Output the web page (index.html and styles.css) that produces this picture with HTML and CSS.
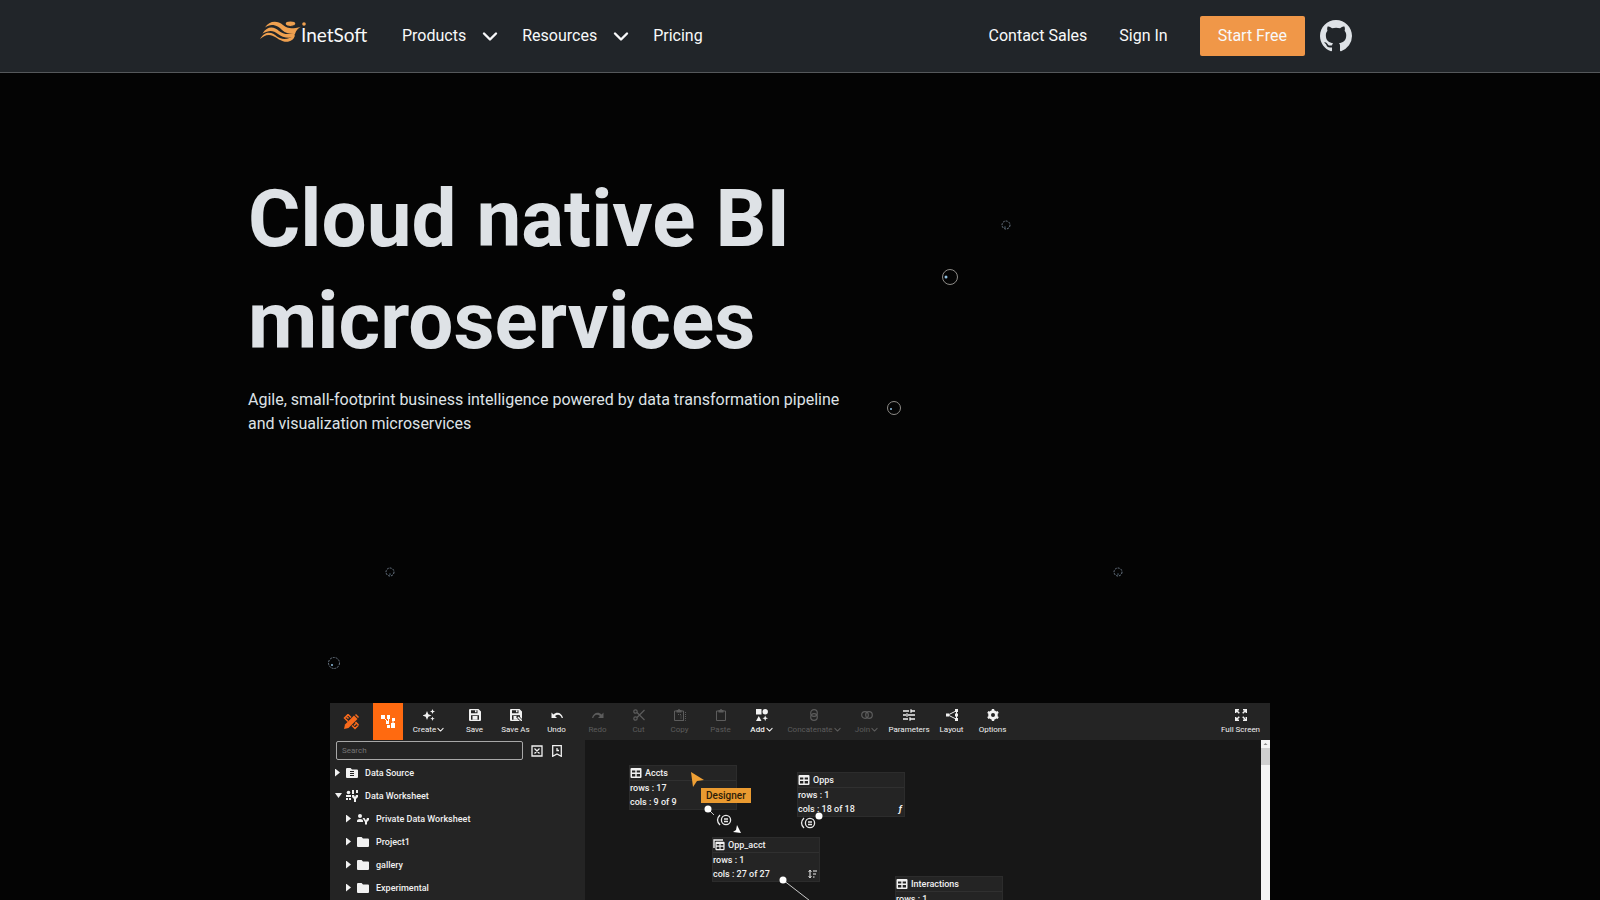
FILE: index.html
```html
<!DOCTYPE html>
<html lang="en">
<head>
  <meta charset="UTF-8" />
  <meta name="viewport" content="width=device-width, initial-scale=1.0"/>
  <title>InetSoft</title>
  <link rel="stylesheet" href="styles.css">
</head>
<body>

  <!-- shared icons -->
  <svg class="sprite" aria-hidden="true">
    <symbol id="chevron" viewBox="0 0 16 16"><path d="M2 5.500l6 6 6-6" fill="none" stroke="currentColor" stroke-width="2.400" stroke-linecap="round" stroke-linejoin="round"/></symbol>
    <symbol id="folder" viewBox="0 0 12 12"><path d="M0 2.200Q0 1 1 1h3.600l1.400 1.500h5q1 0 1 1v6.500q0 1-1 1H1q-1 0-1-1z" fill="currentColor"/></symbol>
    <symbol id="table" viewBox="0 0 12 12"><path fill-rule="evenodd" d="M1.500 1h9q1 0 1 1v8q0 1-1 1h-9q-1 0-1-1V2q0-1 1-1zM2 3.500v2h3.300v-2zM6.700 3.500v2H10v-2zM2 7v2.500h3.300V7zM6.700 7v2.500H10V7z" fill="currentColor"/></symbol>
    <symbol id="rings" viewBox="0 0 12 12"><g fill="none" stroke="currentColor" stroke-width="1.200"><circle cx="4" cy="6" r="3.300"/><circle cx="8" cy="6" r="3.300"/></g></symbol>
    <symbol id="redo" viewBox="0 0 12 12"><path d="M0 9C1 4 6 2 9.600 5.500L11.500 3.600V9H6l2-2C5 4.500 2 6 1.300 9z" fill="currentColor"/></symbol>
    <symbol id="clip" viewBox="0 0 12 12"><path d="M1.500 2h9v9.500h-9z" fill="none" stroke="currentColor"/><path d="M3.500 1h1.300q1.200-1.800 2.400 0h1.300v2.500h-5z" fill="currentColor"/></symbol>
    <symbol id="disk" viewBox="0 0 12 12"><path fill-rule="evenodd" d="M1 0h8.500L12 2.500V11q0 1-1 1H1q-1 0-1-1V1q0-1 1-1zM2 1.300v3h6.500v-3zM2 6.300v4.400h8V6.300z" fill="currentColor"/><path d="M6 1.300h1.500v2H6zM3.500 7h5v3.700h-5z" fill="currentColor"/></symbol>
  </svg>

  <header class="site-header">
    <nav class="container navbar">
      <a class="logo" href="#" aria-label="InetSoft">
        <svg width="110" height="30" viewBox="0 0 110 30">
          <g fill="#efa04f">
            <path d="M5 6.500C9 0 17-1 23 4c5 4 9 4 18 1.700-4 2.300-5 4.300-6 7.300-5 0-10-1-13-4-3-3-5-4-7-4.500-4-1-7 0-10 2z"/>
            <path d="M2.500 12.500C7 5 14 5 19 10c4 3.200 9 4 16 2l-1 4c-6 1.500-12 .5-16-3C13 9 9 9 2.500 12.500z"/>
            <path d="M0 18c5-8.500 12-7.500 17-2.500 5 3.500 11 3.500 18-1.500-1 6-7 7.800-12 6.200-6-2-9-6.200-14-6.200-4 0-6 2-9 4z"/>
            <ellipse cx="30.500" cy="3" rx="4.800" ry="2.400"/>
            <circle cx="44" cy="3" r="1.800"/>
          </g>
          <path d="M25 3.500q5 4 11 0" fill="none" stroke="#212529"/>
          <text x="41" y="21">InetSoft</text>
        </svg>
      </a>
      <div class="nav-links">
        <button type="button" class="nav-drop">Products <svg width="16" height="16"><use href="#chevron"/></svg></button>
        <button type="button" class="nav-drop">Resources <svg width="16" height="16"><use href="#chevron"/></svg></button>
        <a href="#">Pricing</a>
      </div>
      <div class="nav-actions">
        <a href="#">Contact Sales</a>
        <a href="#">Sign In</a>
        <a class="btn-start" href="#">Start Free</a>
        <a class="github" href="#" aria-label="GitHub">
          <svg width="32" height="32" viewBox="0 0 16 16" fill="currentColor"><path d="M8 0C3.580 0 0 3.580 0 8c0 3.540 2.290 6.530 5.470 7.590.4.070.55-.17.55-.38 0-.19-.01-.82-.01-1.490-2.010.37-2.530-.49-2.690-.94-.09-.23-.48-.94-.82-1.130-.28-.15-.68-.52-.01-.53.63-.01 1.080.58 1.230.82.72 1.210 1.870.87 2.330.66.070-.52.28-.87.51-1.070-1.780-.2-3.640-.89-3.640-3.950 0-.87.31-1.590.82-2.150-.08-.2-.36-1.020.08-2.120 0 0 .67-.21 2.200.82.64-.18 1.320-.27 2-.27s1.360.09 2 .27c1.530-1.040 2.200-.82 2.200-.82.44 1.100.16 1.920.08 2.120.51.56.82 1.270.82 2.150 0 3.070-1.870 3.750-3.650 3.950.29.25.54.73.54 1.480 0 1.070-.01 1.930-.01 2.200 0 .21.15.46.55.38A8.010 8.010 0 0 0 16 8c0-4.420-3.580-8-8-8z"/></svg>
        </a>
      </div>
    </nav>
  </header>

  <main>
    <section class="container hero">
      <h1>Cloud native BI microservices</h1>
      <p>Agile, small-footprint business intelligence powered by data transformation pipeline and visualization microservices</p>

      <!-- floating bubbles -->
      <svg class="bubbles" aria-hidden="true">
        <g fill="none" stroke="#8d8b87" stroke-width="1">
          <circle cx="702" cy="204" r="7.500"/>
          <circle cx="646" cy="335" r="6.500"/>
          <g stroke-dasharray="2 1" stroke="#6c7886">
            <circle cx="758" cy="152" r="4"/>
            <circle cx="86" cy="590" r="5.500"/>
            <circle cx="142" cy="499" r="4"/>
            <circle cx="870" cy="499" r="4"/>
          </g>
        </g>
        <g fill="#8fbfe0">
          <circle cx="698" cy="204" r="1.500"/>
          <circle cx="643" cy="336" r="1"/>
          <circle cx="84" cy="592" r="1"/>
          <circle cx="757" cy="154" r=".6"/>
          <circle cx="142" cy="501" r=".6"/>
          <circle cx="870" cy="501" r=".6"/>
        </g>
      </svg>
    </section>

    <section class="designer">
      <div class="toolbar">
        <button type="button" class="mode" aria-label="Design">
          <svg width="17" height="17" viewBox="0 0 17 17" fill="none" stroke="currentColor"><path d="M1 16l1-4.500 9-9 3.500 3.500-9 9z" fill="currentColor" stroke="none"/><path d="M5 1.500L1.500 5l3.500 3.500M5 1.500L8 4.500M3.500 3.500l2 2M15.500 12L12 15.500l-3-3M15.500 12l-3-3M13 10.500L11 12.500M12.500 1.500l3 3" stroke-width="1.500"/></svg>
        </button>
        <button type="button" class="mode active" aria-label="Worksheet">
          <svg width="15" height="15" viewBox="0 0 15 15" fill="currentColor"><path d="M0 1h4v4H0zM6 1h3v4H6zM11 4h3v3h-3zM5 7h3v3H5zM10 9h4v5h-4zM6 11h3v3H6z"/><path d="M3 4l4 4M7.500 4v4M12 6v4" stroke="currentColor"/></svg>
        </button>
        <button type="button" class="tool wide">
          <svg width="12" height="12" viewBox="0 0 12 12" fill="currentColor"><path d="M4 2l1.300 3.200L8.500 6.500 5.300 7.800 4 11 2.700 7.800-.5 6.500l3.200-1.300zM9.500 0l.7 1.800 1.800.7-1.800.7-.7 1.800-.7-1.800L7 2.500l1.800-.7zM9.500 7.500l.6 1.600 1.600.6-1.600.6-.6 1.600-.6-1.600-1.600-.6 1.600-.6z"/></svg>
          <span>Create <svg width="7" height="7"><use href="#chevron"/></svg></span>
        </button>
        <button type="button" class="tool">
          <svg width="12" height="12"><use href="#disk"/></svg>
          <span>Save</span>
        </button>
        <button type="button" class="tool">
          <svg width="12" height="12" viewBox="0 0 12 12"><use href="#disk"/><path d="M7 7l4.500 4.500" stroke="#242424" stroke-width="3"/><path d="M8 8l4 4" stroke="currentColor" stroke-width="1.500"/></svg>
          <span>Save As</span>
        </button>
        <button type="button" class="tool">
          <svg class="flip" width="12" height="12"><use href="#redo"/></svg>
          <span>Undo</span>
        </button>
        <button type="button" class="tool" disabled>
          <svg width="12" height="12"><use href="#redo"/></svg>
          <span>Redo</span>
        </button>
        <button type="button" class="tool" disabled>
          <svg width="12" height="12" viewBox="0 0 12 12" fill="none" stroke="currentColor" stroke-width="1.200"><circle cx="2.500" cy="2.500" r="1.700"/><circle cx="2.500" cy="9.500" r="1.700"/><path d="M4 3.500l7.500 7.500M4 8.500L11.500 1"/></svg>
          <span>Cut</span>
        </button>
        <button type="button" class="tool" disabled>
          <svg width="14" height="12" viewBox="0 0 14 12"><use href="#clip" x="0" y="0" width="12" height="12"/><path d="M5 5.500h3v4M12.500 3v8.500H6" fill="none" stroke="currentColor" stroke-dasharray="1 1"/></svg>
          <span>Copy</span>
        </button>
        <button type="button" class="tool" disabled>
          <svg width="12" height="12"><use href="#clip"/></svg>
          <span>Paste</span>
        </button>
        <button type="button" class="tool">
          <svg width="12" height="12" viewBox="0 0 12 12" fill="currentColor"><path d="M0 0h5.500v5.500H0z"/><circle cx="9.200" cy="2.800" r="2.700"/><path d="M2.800 7l2.700 5H0zM9.200 6.500l.8 2 2 .8-2 .8-.8 2-.8-2-2-.8 2-.8z"/></svg>
          <span class="strong">Add <svg width="7" height="7"><use href="#chevron"/></svg></span>
        </button>
        <button type="button" class="tool wider" disabled>
          <svg class="turn" width="12" height="12"><use href="#rings"/></svg>
          <span>Concatenate <svg width="7" height="7"><use href="#chevron"/></svg></span>
        </button>
        <button type="button" class="tool" disabled>
          <svg width="12" height="12"><use href="#rings"/></svg>
          <span>Join <svg width="7" height="7"><use href="#chevron"/></svg></span>
        </button>
        <button type="button" class="tool mid">
          <svg width="12" height="12" viewBox="0 0 12 12" fill="none" stroke="currentColor" stroke-width="1.300"><path d="M0 2h6M8 2h4M8 .2v3.600M0 6h3M5 6h7M4 4.200v3.600M0 10h5M7 10h5M7 8.200v3.600"/></svg>
          <span>Parameters</span>
        </button>
        <button type="button" class="tool">
          <svg width="12" height="12" viewBox="0 0 12 12"><path d="M2 6l8-4M2 6l8 4M10.500 2v8" stroke="currentColor" fill="none"/><path d="M0 4.500h3v3H0zM9 0h3v3H9zM9 4.500h3v3H9zM9 9h3v3H9z" fill="currentColor"/></svg>
          <span>Layout</span>
        </button>
        <button type="button" class="tool">
          <svg width="12" height="12" viewBox="0 0 12 12"><g fill="none" stroke="currentColor"><circle cx="6" cy="6" r="3.500" stroke-width="2.600"/><path d="M6 0v12M.8 3l10.400 6M.8 9l10.400-6" stroke-width="2.400"/></g><circle cx="6" cy="6" r="2" fill="#242424"/></svg>
          <span>Options</span>
        </button>
        <button type="button" class="tool wide full-screen">
          <svg width="12" height="12" viewBox="0 0 12 12" fill="none" stroke="currentColor" stroke-width="1.500"><path d="M.7 4V.7H4M.7.7l3.600 3.600M8 .7h3.300V4M11.300.7L7.700 4.300M.7 8v3.300H4M.7 11.300l3.600-3.600M8 11.300h3.300V8M11.300 11.300L7.700 7.700"/></svg>
          <span>Full Screen</span>
        </button>
      </div>

      <div class="workspace">
        <aside class="side">
          <div class="search-row">
            <input type="text" placeholder="Search" aria-label="Search">
            <button type="button" class="icon-btn" aria-label="Clear"><svg width="12" height="12" viewBox="0 0 12 12" fill="none" stroke="currentColor" stroke-width="1.300"><path d="M1 1h10v10H1zM3.500 3.500l5 5M8.500 3.500l-5 5"/></svg></button>
            <button type="button" class="icon-btn" aria-label="Recent"><svg width="12" height="12" viewBox="0 0 12 12" fill="none" stroke="currentColor" stroke-width="1.300"><path d="M1.700.7h8.600v10.600L6 9l-4.300 2.300zM6 3v2.500h2"/></svg></button>
          </div>
          <ul class="tree">
            <li>
              <i class="caret"></i>
              <svg width="12" height="12" viewBox="0 0 12 12"><use href="#folder"/><path d="M4 4.500h4M4 6.500h4M4 8.500h4" stroke="#242424"/></svg>
              Data Source
            </li>
            <li>
              <i class="caret open"></i>
              <svg width="12" height="12" viewBox="0 0 12 12" fill="currentColor"><circle cx="2.500" cy="2.500" r="1.800"/><path d="M0 5h5v2H0zM0 8h2v2H0zM3 8h2v2H3zM6 0h2v4H6zM10 0h2v3h-2zM6 5h2l1 2 1-2h2v2l-2 2v3H8V9L6 7z"/></svg>
              Data Worksheet
            </li>
            <li class="sub">
              <i class="caret"></i>
              <svg width="12" height="12" viewBox="0 0 12 12" fill="currentColor"><circle cx="3" cy="3" r="2"/><path d="M0 8q0-2 3-2t3 2v1H0zM5.500 5h2l1.500 2.500L10 5h2v2l-2 2v2.500H8V9z"/></svg>
              Private Data Worksheet
            </li>
            <li class="sub"><i class="caret"></i><svg width="12" height="12"><use href="#folder"/></svg>Project1</li>
            <li class="sub"><i class="caret"></i><svg width="12" height="12"><use href="#folder"/></svg>gallery</li>
            <li class="sub"><i class="caret"></i><svg width="12" height="12"><use href="#folder"/></svg>Experimental</li>
          </ul>
        </aside>

        <div class="canvas">
          <article class="node accts">
            <h2><svg width="12" height="12"><use href="#table"/></svg>Accts</h2>
            <p>rows : 17</p>
            <p>cols : 9 of 9</p>
          </article>
          <article class="node opps">
            <h2><svg width="12" height="12"><use href="#table"/></svg>Opps</h2>
            <p>rows : 1</p>
            <p>cols : 18 of 18 <em>ƒ</em></p>
          </article>
          <article class="node opp-acct">
            <h2><svg width="12" height="12" viewBox="0 0 12 12"><path d="M1 9V1h9" fill="none" stroke="currentColor" stroke-width="1.400"/><use href="#table" x="2" y="2" width="10" height="10"/></svg>Opp_acct</h2>
            <p>rows : 1</p>
            <p>cols : 27 of 27 <svg width="9" height="8" viewBox="0 0 9 8"><path d="M2 0v8M.5 1.500L2 .5l1.500 1M.5 6.500L2 7.500l1.500-1M5 1h4M5 4h3M5 7h1.500" fill="none" stroke="currentColor"/></svg></p>
          </article>
          <article class="node interactions">
            <h2><svg width="12" height="12"><use href="#table"/></svg>Interactions</h2>
            <p>rows : 1</p>
          </article>

          <!-- links between the tables -->
          <svg class="links" aria-hidden="true">
            <g stroke="#c8c8c8" stroke-width="1"><path d="M123 69l6 6M198 140l44 34"/></g>
            <g fill="#fff">
              <circle cx="123" cy="69" r="3.500"/>
              <circle cx="234" cy="76" r="3.500"/>
              <circle cx="198" cy="140" r="3.500"/>
              <path d="M156 93l-8-1 3-2 1-5z"/>
            </g>
            <g fill="none" stroke="#e8e8e8" stroke-width="1.300">
              <g id="join"><circle cx="141" cy="80" r="4.600"/><path d="M135 75q-5 5 0 10M139 79h4M139 81.500h4"/></g>
              <use href="#join" x="84" y="3"/>
            </g>
            <path d="M106 32l13 8-7 1-4 6z" fill="#efa035"/>
          </svg>
          <span class="tag">Designer</span>
        </div>

        <div class="scroll">
          <svg width="9" height="8" viewBox="0 0 9 8"><path d="M2.500 5l2-2 2 2z" fill="#8a8a8a"/></svg>
          <i></i>
        </div>
      </div>
    </section>
  </main>

</body>
</html>
```
FILE: styles.css
```css
* {
  box-sizing: border-box;
}

body {
  margin: 0;
  height: 100vh;
  overflow: hidden;
  display: flex;
  flex-direction: column;
  font-family: Roboto, sans-serif;
  font-size: 16px;
  line-height: 24px;
  color: #dee2e6;
  background-color: #040404;
}

a {
  color: inherit;
  text-decoration: none;
}

button {
  font: inherit;
  color: inherit;
  background: none;
  border: none;
  padding: 0;
  cursor: pointer;
}

.sprite {
  display: none;
}

.container {
  width: 100%;
  max-width: 1104px;
  margin: 0 auto;
}

/* Header */
.site-header {
  flex: none;
  background-color: #212529;
  border-bottom: 1px solid #55585b;
  color: #f8f9fa;
}

.navbar {
  display: flex;
  align-items: center;
  height: 72px;
}

.logo {
  display: flex;
  padding-left: 12px;
  margin-right: 32px;
}

.logo text {
  font-family: Lato, sans-serif;
  font-size: 19px;
  fill: #f8f9fa;
}

.nav-links,
.nav-actions {
  display: flex;
  align-items: center;
}

.nav-links {
  gap: 24px;
}

.nav-drop {
  display: flex;
  align-items: center;
  gap: 16px;
}

.nav-actions {
  gap: 32px;
  margin-left: auto;
}

.btn-start {
  padding: 8px 18px;
  background-color: #f09748;
  border-radius: 2px;
}

.github {
  display: flex;
  margin-left: -17px;
  color: #dee2e6;
}

/* Hero */
main {
  flex: 1;
  display: flex;
  flex-direction: column;
  min-height: 0;
}

.hero {
  flex: none;
  position: relative;
  min-height: 630px;
  padding-top: 95px;
}

.hero h1 {
  margin: 0 0 16px;
  max-width: 600px;
  font-size: 80px;
  line-height: 102px;
  font-weight: 700;
}

.hero p {
  margin: 0;
  max-width: 600px;
}

.bubbles {
  position: absolute;
  top: 0;
  left: 0;
  width: 100%;
  height: 100%;
}

/* Designer preview */
.designer {
  flex: 1;
  display: flex;
  flex-direction: column;
  width: 100%;
  max-width: 940px;
  min-height: 0;
  margin: 0 auto;
  overflow: hidden;
  font-size: 9px;
  font-weight: 500;
  line-height: 14px;
  color: #f1f1f1;
  background-color: #242424;
}

.toolbar {
  flex: none;
  display: flex;
  height: 37px;
  padding-right: 4px;
}

.mode {
  display: flex;
  align-items: center;
  justify-content: center;
  width: 43px;
  color: #f86a1c;
}

.mode.active {
  width: 30px;
  color: #fff;
  background-color: #ff6a10;
}

.tool {
  display: flex;
  flex-direction: column;
  align-items: center;
  gap: 4px;
  width: 41px;
  padding-top: 6px;
  font-size: 8px;
  font-weight: 400;
  line-height: 10px;
  white-space: nowrap;
}

.tool:disabled {
  color: #5c5c5c;
}

.tool span svg {
  vertical-align: middle;
  margin-left: -1px;
}

.strong {
  font-weight: 500;
}

.mid {
  width: 44px;
}

.wide {
  width: 51px;
}

.wider {
  width: 64px;
}

.flip {
  transform: scaleX(-1);
}

.turn {
  transform: rotate(90deg);
}

.full-screen {
  margin-left: auto;
}

.workspace {
  flex: 1;
  display: flex;
  min-height: 0;
}

.side {
  flex: none;
  width: 255px;
}

.search-row {
  display: flex;
  align-items: center;
  gap: 8px;
  padding: 1px 6px;
}

.search-row input {
  width: 187px;
  height: 19px;
  padding: 0 5px;
  font-family: inherit;
  font-size: 8px;
  color: inherit;
  background: none;
  border: 1px solid #a8a8a8;
  border-radius: 2px;
}

.search-row input::placeholder {
  color: #747474;
}

.icon-btn {
  display: flex;
}

.tree {
  margin: 0;
  padding: 0;
  list-style: none;
}

.tree li {
  display: flex;
  align-items: center;
  height: 23px;
  padding-left: 5px;
}

.tree li.sub {
  padding-left: 16px;
}

.tree svg {
  margin: 0 7px 0 6px;
}

.caret {
  width: 5px;
  height: 8px;
  background-color: currentColor;
  clip-path: polygon(0 0, 100% 50%, 0 100%);
}

.caret.open {
  width: 7px;
  height: 5px;
  margin-right: -2px;
  clip-path: polygon(0 0, 100% 0, 50% 100%);
}

.canvas {
  flex: 1;
  position: relative;
  overflow: hidden;
  background-color: #171717;
}

.node {
  position: absolute;
  width: 108px;
  height: 45px;
  background-color: #242424;
  border: 1px solid #2c2c2c;
}

.node h2 {
  display: flex;
  align-items: center;
  gap: 3px;
  height: 15px;
  margin: 0;
  border-bottom: 1px solid #303030;
  font-size: 9px;
  font-weight: 500;
}

.node p {
  display: flex;
  align-items: center;
  justify-content: space-between;
  margin: 0;
  padding-right: 2px;
}

.node em {
  font-weight: 700;
}

.accts {
  left: 44px;
  top: 25px;
}

.opps {
  left: 212px;
  top: 32px;
}

.opp-acct {
  left: 127px;
  top: 97px;
}

.interactions {
  left: 310px;
  top: 136px;
}

.links {
  position: absolute;
  top: 0;
  left: 0;
  width: 100%;
  height: 100%;
}

.tag {
  position: absolute;
  left: 116px;
  top: 48px;
  padding: 0 5px;
  font-size: 10px;
  line-height: 15px;
  color: #2c1d08;
  background-color: #ea9a30;
}

.scroll {
  flex: none;
  width: 9px;
  background-color: #f4f4f4;
}

.scroll svg,
.scroll i {
  display: block;
}

.scroll i {
  height: 17px;
  background-color: #cfcfcf;
}
```
